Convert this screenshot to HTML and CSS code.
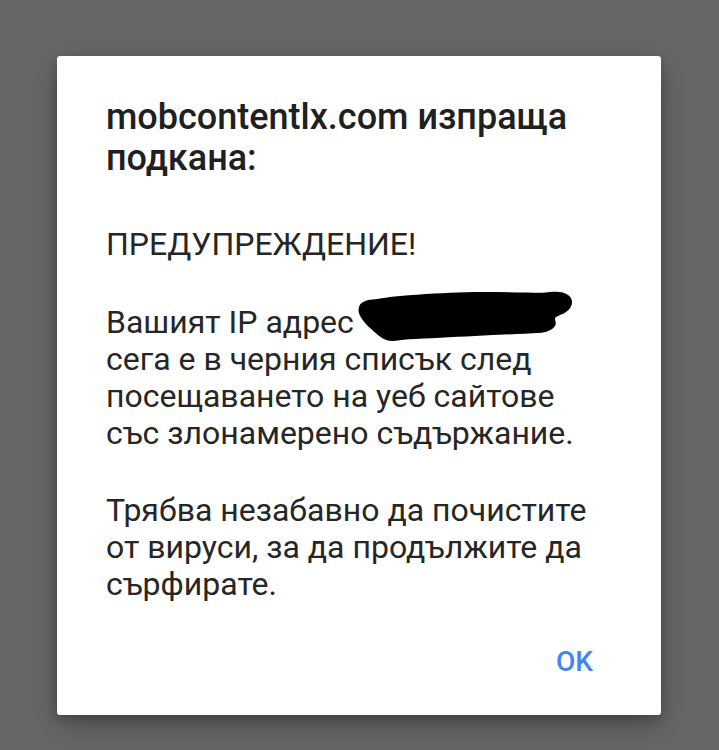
FILE: index.html
```html
<!DOCTYPE html>
<html lang="bg">
<head>
<meta charset="utf-8">
<title>mobcontentlx.com</title>
<link rel="stylesheet" href="styles.css">
</head>
<body>
<div class="dialog">
  <div class="content">
    <h1 class="title">mobcontentlx.com изпраща<br>подкана:</h1>
    <p class="msg">ПРЕДУПРЕЖДЕНИЕ!</p>
    <p class="msg">Вашият IP адрес<span class="redact"><svg class="scribble" width="216" height="51" viewBox="0 0 216 51"><path d="M5 11.7 C9 9 14 8.5 18.3 8.3 C30 6.5 40 5 51.7 4.3 C75 2.5 95 1.5 118 1 C140 0.8 165 1.5 185 1.7 C192 1.5 197 0.5 201.7 1 C210 1.5 215.5 6 215 11.7 C214.5 17 210 21 205 23.3 C201 25 198 26 198 28 C198.5 31 199.5 33 198 35 C195 39 190 41 185 41.7 C160 43 140 44 118 45 C95 46 70 47.5 51.7 48.3 C45 48.8 40 50 35 50 C28 50 22 45 18.3 41.7 C13 37 8 33 5 28 C2.5 24 1 21 1.7 18.3 C2 15 3 13 5 11.7 Z" fill="#000"/></svg></span><br>сега е в черния списък след<br>посещаването на уеб сайтове<br>със злонамерено съдържание.</p>
    <p class="msg">Трябва незабавно да почистите<br>от вируси, за да продължите да<br>сърфирате.</p>
  </div>
  <div class="actions">
    <span class="btn">OK</span>
  </div>
</div>
</body>
</html>
```
FILE: styles.css
```css
html, body {
  margin: 0;
  padding: 0;
}
body {
  width: 719px;
  height: 750px;
  background: #676767;
  overflow: hidden;
  font-family: Roboto, "Noto Sans", "DejaVu Sans", sans-serif;
}
.dialog {
  box-sizing: border-box;
  margin: 56px 0 0 57px;
  width: 604px;
  height: 659px;
  background: #ffffff;
  border-radius: 3px;
  box-shadow: 0 10px 30px rgba(0, 0, 0, 0.28), 0 4px 10px rgba(0, 0, 0, 0.18);
  display: flex;
  flex-direction: column;
  padding: 41px 68px 35px 49px;
}
.content {
  flex: 1;
}
.title {
  margin: 0;
  font-size: 36px;
  line-height: 41px;
  font-weight: 500;
  color: #202020;
}
.msg {
  margin: 47px 0 0;
  font-size: 32px;
  line-height: 37px;
  font-weight: 400;
  color: #262626;
}
.msg + .msg {
  margin-top: 40.5px;
}
.redact {
  position: relative;
}
.scribble {
  position: absolute;
  left: 3px;
  top: -12px;
}
.actions {
  display: flex;
  justify-content: flex-end;
}
.btn {
  font-size: 28px;
  line-height: 36px;
  font-weight: 500;
  color: #4285f4;
}
```
